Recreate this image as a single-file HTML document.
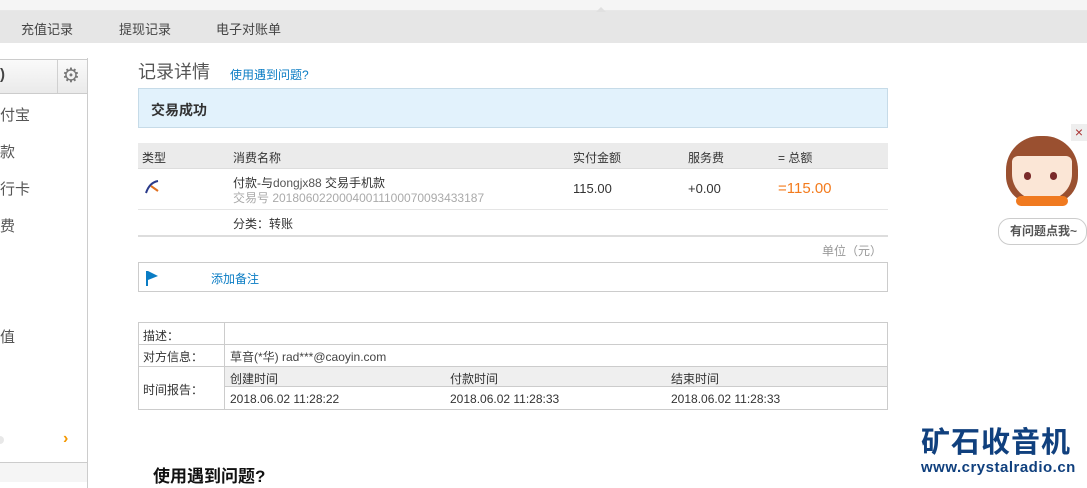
<!DOCTYPE html>
<html><head><meta charset="utf-8"><style>
*{margin:0;padding:0;box-sizing:border-box}
body{width:1087px;height:481px;overflow:hidden;background:#fff;font-family:"Liberation Sans","Noto Sans CJK SC",sans-serif;font-size:12px;color:#333;position:relative}
.a{position:absolute;white-space:nowrap}
.blue{color:#0a7cc4}
.gray{color:#aaa}
</style></head><body>
<div class="a" style="left:0;top:0;width:1087px;height:11px;background:#f5f5f5;border-bottom:1px solid #e8e8e8"></div>
<div class="a" style="left:0;top:11px;width:1087px;height:32px;background:#e6e6e6"></div>
<div class="a" style="left:596px;top:7px;width:0;height:0;border-left:5px solid transparent;border-right:5px solid transparent;border-bottom:5px solid #e0e0e0"></div>
<div class="a" style="left:21px;top:19px;font-size:13px;color:#444">充值记录</div>
<div class="a" style="left:119px;top:19px;font-size:13px;color:#444">提现记录</div>
<div class="a" style="left:216px;top:19px;font-size:13px;color:#444">电子对账单</div>

<div class="a" style="left:0;top:58px;width:88px;height:430px;border-right:1px solid #ccc"></div>
<div class="a" style="left:0;top:59px;width:87px;height:35px;background:linear-gradient(#fafafa,#eaeaea);border-top:1px solid #ccc;border-bottom:1px solid #ccc"></div>
<div class="a" style="left:57px;top:60px;width:1px;height:33px;background:#d0d0d0"></div>
<div class="a" style="left:0;top:66px;font-size:15px;font-weight:bold;color:#444">)</div>
<div class="a" style="left:62px;top:64px;font-size:20px;color:#777;line-height:24px">⚙</div>
<div class="a" style="left:0;top:104px;font-size:15px;color:#555">付宝</div>
<div class="a" style="left:0;top:141px;font-size:15px;color:#555">款</div>
<div class="a" style="left:0;top:178px;font-size:15px;color:#555">行卡</div>
<div class="a" style="left:0;top:215px;font-size:15px;color:#555">费</div>
<div class="a" style="left:0;top:326px;font-size:15px;color:#555">值</div>
<div class="a" style="left:-4px;top:436px;width:8px;height:8px;border-radius:4px;background:#e8e8e8"></div>
<div class="a" style="left:63px;top:430px;font-size:16px;font-weight:bold;color:#f39800">›</div>
<div class="a" style="left:0;top:462px;width:87px;height:20px;background:#f5f5f5;border-top:1px solid #ccc"></div>

<div class="a" style="left:138px;top:58px;font-size:18px;color:#555">记录详情</div>
<div class="a blue" style="left:230px;top:66px">使用遇到问题?</div>
<div class="a" style="left:138px;top:88px;width:750px;height:40px;background:#e2f2fc;border:1px solid #c6dbe8"></div>
<div class="a" style="left:151px;top:100px;font-size:14px;font-weight:bold;color:#333">交易成功</div>

<div class="a" style="left:138px;top:143px;width:750px;height:26px;background:#ebebeb;border-bottom:1px solid #ddd"></div>
<div class="a" style="left:142px;top:149px">类型</div>
<div class="a" style="left:233px;top:149px">消费名称</div>
<div class="a" style="left:573px;top:149px">实付金额</div>
<div class="a" style="left:688px;top:149px">服务费</div>
<div class="a" style="left:778px;top:149px">= 总额</div>
<svg class="a" style="left:143px;top:179px" width="18" height="16" viewBox="0 0 18 16"><path d="M3 14 C5 8 9 3 15 2" stroke="#2a3a8a" stroke-width="2" fill="none"/><path d="M8 7 L15 12" stroke="#e07020" stroke-width="2"/></svg>
<div class="a" style="left:233px;top:174px">付款-与<span style="color:#555">dongjx88</span> 交易手机款</div>
<div class="a gray" style="left:233px;top:189px">交易号 20180602200040011100070093433187</div>
<div class="a" style="left:573px;top:181px;font-size:13px">115.00</div>
<div class="a" style="left:688px;top:181px;font-size:13px">+0.00</div>
<div class="a" style="left:778px;top:180px;font-size:15px;color:#f37b1d">=115.00</div>
<div class="a" style="left:138px;top:209px;width:750px;height:1px;background:#e5e5e5"></div>
<div class="a" style="left:233px;top:215px">分类：转账</div>
<div class="a" style="left:138px;top:235px;width:750px;height:2px;background:#ddd"></div>
<div class="a" style="left:822px;top:242px;color:#999">单位（元）</div>

<div class="a" style="left:138px;top:262px;width:750px;height:30px;border:1px solid #ccc"></div>
<svg class="a" style="left:145px;top:270px" width="14" height="16"><rect x="1" y="1" width="2" height="15" fill="#0a7cc4"/><path d="M3 1 L13 6 L3 10Z" fill="#0a7cc4"/></svg>
<div class="a blue" style="left:211px;top:270px">添加备注</div>

<div class="a" style="left:138px;top:322px;width:750px;height:88px;border:1px solid #ccc"></div>
<div class="a" style="left:224px;top:322px;width:1px;height:88px;background:#ccc"></div>
<div class="a" style="left:138px;top:344px;width:750px;height:1px;background:#ccc"></div>
<div class="a" style="left:138px;top:366px;width:750px;height:1px;background:#ccc"></div>
<div class="a" style="left:225px;top:367px;width:662px;height:20px;background:#efefef;border-bottom:1px solid #ccc"></div>
<div class="a" style="left:143px;top:327px">描述：</div>
<div class="a" style="left:143px;top:348px">对方信息：</div>
<div class="a" style="left:230px;top:348px;color:#444">草音(*华) rad***@caoyin.com</div>
<div class="a" style="left:143px;top:381px">时间报告：</div>
<div class="a" style="left:230px;top:370px">创建时间</div>
<div class="a" style="left:450px;top:370px">付款时间</div>
<div class="a" style="left:671px;top:370px">结束时间</div>
<div class="a" style="left:230px;top:392px">2018.06.02 11:28:22</div>
<div class="a" style="left:450px;top:392px">2018.06.02 11:28:33</div>
<div class="a" style="left:671px;top:392px">2018.06.02 11:28:33</div>

<div class="a" style="left:153px;top:462px;font-size:17px;font-weight:bold;color:#111">使用遇到问题?</div>

<div class="a" style="left:1071px;top:124px;width:16px;height:17px;background:#eee;color:#a33;font-size:14px;line-height:16px;text-align:center">×</div>
<div class="a" style="left:1006px;top:136px;width:72px;height:68px;border-radius:34px 34px 28px 28px;background:#9a5030"></div>
<div class="a" style="left:1012px;top:156px;width:60px;height:44px;border-radius:6px 6px 26px 26px;background:#fbe6d6"></div>
<div class="a" style="left:1024px;top:172px;width:7px;height:8px;border-radius:4px;background:#7a2a2a"></div>
<div class="a" style="left:1050px;top:172px;width:7px;height:8px;border-radius:4px;background:#7a2a2a"></div>
<div class="a" style="left:1016px;top:196px;width:52px;height:10px;border-radius:5px;background:#f07a20"></div>
<div class="a" style="left:998px;top:218px;width:89px;height:27px;border:1px solid #ccc;border-radius:12px;background:#fff;font-size:12px;color:#555;line-height:25px;padding-left:11px;font-weight:bold">有问题点我~</div>
<div class="a" style="left:921px;top:419px;font-size:29px;font-weight:bold;color:#10407e;letter-spacing:1px">矿石收音机</div>
<div class="a" style="left:921px;top:459px;font-size:15px;font-weight:bold;color:#10407e;letter-spacing:0.5px">www.crystalradio.cn</div>
</body></html>
